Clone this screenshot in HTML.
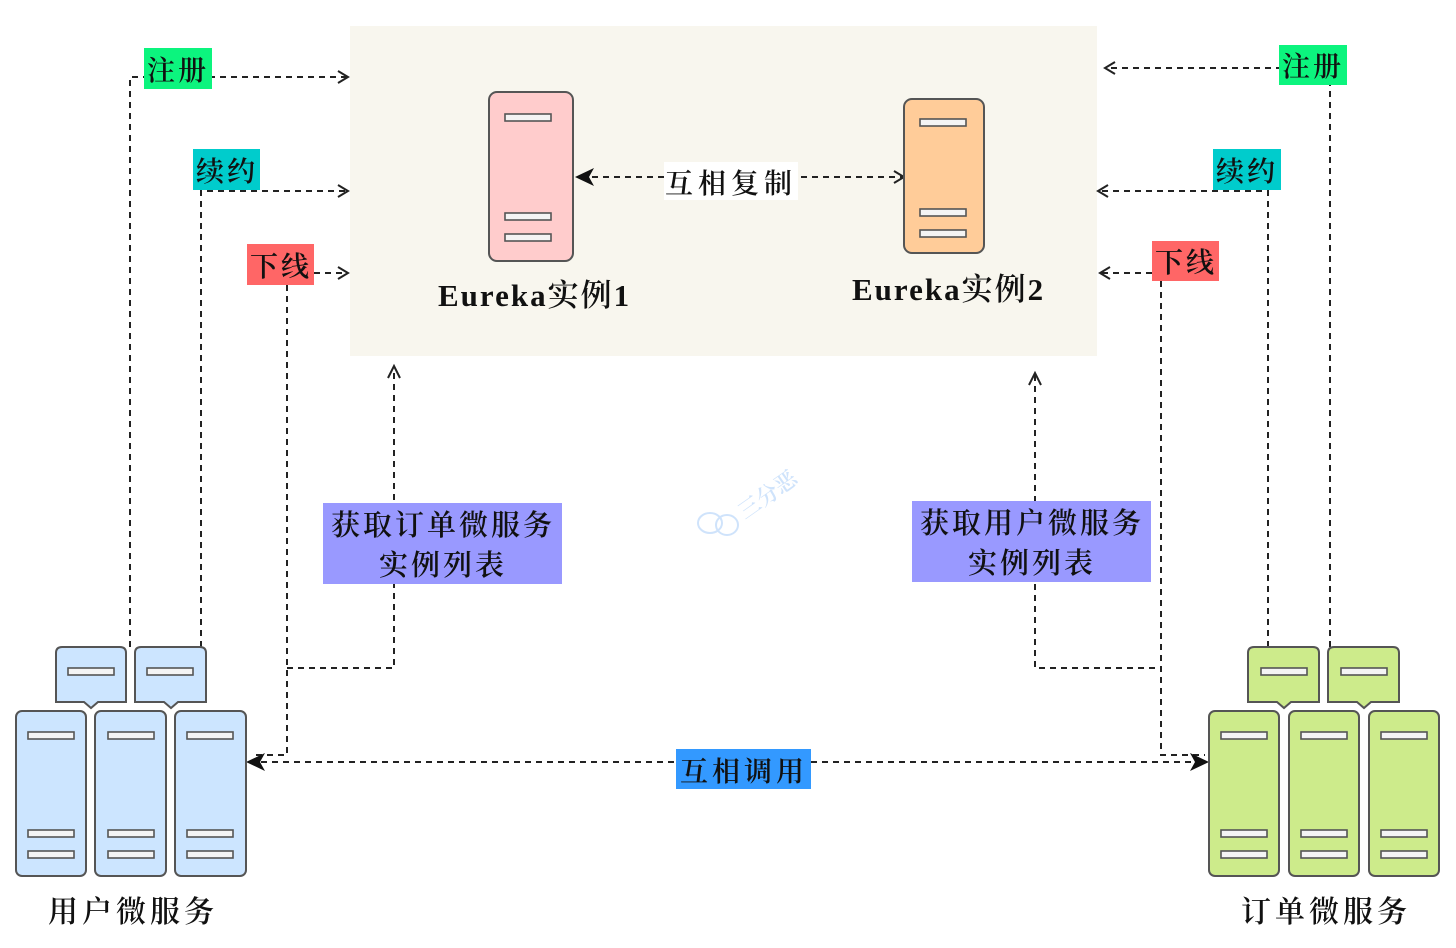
<!DOCTYPE html>
<html><head><meta charset="utf-8"><style>
html,body{margin:0;padding:0;background:#fff;}
svg{display:block;}
text{font-family:"Liberation Serif","Noto Serif CJK SC",serif;fill:#111;font-weight:600;}
</style></head><body>
<svg width="1456" height="948" viewBox="0 0 1456 948" xmlns="http://www.w3.org/2000/svg">
<defs>
<g id="bar"><rect width="46" height="7" fill="#f4f4f4" stroke="#555" stroke-width="1.6"/></g>
</defs>
<rect x="350" y="26" width="747" height="330" fill="#f8f6ee"/>

<g stroke="#222" stroke-width="2" stroke-dasharray="6,5" fill="none">
<path d="M130 647 V77 H346"/>
<path d="M201 647 V191 H346"/>
<path d="M287 285 V755 H252"/>
<path d="M287 668 H394 V368"/>
<path d="M1330 647 V68 H1108"/>
<path d="M1268 647 V191 H1100"/>
<path d="M1161 281 V755 H1205"/>
<path d="M1155 668 H1035 V375"/>
<path d="M250 762 H1206"/>
<path d="M592 177 H902"/>
<path d="M1152 273 H1100"/>
<path d="M314 273 H346"/>
</g>
<g stroke="#222" stroke-width="2" fill="none">
<path d="M338 71 L348 77 L338 83"/><path d="M338 185 L348 191 L338 197"/><path d="M338 267 L348 273 L338 279"/>
<path d="M1115 62 L1105 68 L1115 74"/><path d="M1108 185 L1098 191 L1108 197"/><path d="M1110 267 L1100 273 L1110 279"/>
<path d="M388 378 L394 366 L400 378"/><path d="M1029 385 L1035 373 L1041 385"/>
<path d="M894 171 L904 177 L894 183"/>
</g>
<g fill="#111">
<path d="M575 177 L594 168 L589 177 L594 186 Z"/>
<path d="M246 762 L265 753 L260 762 L265 771 Z"/>
<path d="M1209 762 L1190 753 L1195 762 L1190 771 Z"/>
</g>

<rect x="489" y="92" width="84" height="169" rx="8" fill="#ffcccc" stroke="#555" stroke-width="2"/>
<use href="#bar" x="505" y="114"/><use href="#bar" x="505" y="213"/><use href="#bar" x="505" y="234"/>
<rect x="904" y="99" width="80" height="154" rx="8" fill="#ffcc99" stroke="#555" stroke-width="2"/>
<use href="#bar" x="920" y="119"/><use href="#bar" x="920" y="209"/><use href="#bar" x="920" y="230"/>
<text x="438" y="306" font-size="31" letter-spacing="2">Eureka实例1</text>
<text x="852" y="300" font-size="31" letter-spacing="2">Eureka实例2</text>
<rect x="664" y="162" width="134" height="38" fill="#fff"/>
<text x="731" y="193" font-size="28" text-anchor="middle" letter-spacing="5">互相复制</text>

<g fill="#cce5ff" stroke="#555" stroke-width="2">
<path d="M62 647 H120 Q126 647 126 653 V702 H98 L91 708 L84 702 H56 V653 Q56 647 62 647Z"/>
<path d="M141 647 H200 Q206 647 206 653 V702 H178 L171 708 L164 702 H135 V653 Q135 647 141 647Z"/>
<rect x="16" y="711" width="70" height="165" rx="6"/>
<rect x="95" y="711" width="71" height="165" rx="6"/>
<rect x="175" y="711" width="71" height="165" rx="6"/>
</g>
<use href="#bar" x="68" y="668"/><use href="#bar" x="147" y="668"/>
<use href="#bar" x="28" y="732"/><use href="#bar" x="28" y="830"/><use href="#bar" x="28" y="851"/>
<use href="#bar" x="108" y="732"/><use href="#bar" x="108" y="830"/><use href="#bar" x="108" y="851"/>
<use href="#bar" x="187" y="732"/><use href="#bar" x="187" y="830"/><use href="#bar" x="187" y="851"/>
<text x="133" y="922" font-size="30" text-anchor="middle" letter-spacing="4">用户微服务</text>

<g fill="#cdeb8b" stroke="#555" stroke-width="2">
<path d="M1254 647 H1313 Q1319 647 1319 653 V702 H1291 L1284 708 L1277 702 H1248 V653 Q1248 647 1254 647Z"/>
<path d="M1334 647 H1393 Q1399 647 1399 653 V702 H1371 L1364 708 L1357 702 H1328 V653 Q1328 647 1334 647Z"/>
<rect x="1209" y="711" width="70" height="165" rx="6"/>
<rect x="1289" y="711" width="70" height="165" rx="6"/>
<rect x="1369" y="711" width="70" height="165" rx="6"/>
</g>
<use href="#bar" x="1261" y="668"/><use href="#bar" x="1341" y="668"/>
<use href="#bar" x="1221" y="732"/><use href="#bar" x="1221" y="830"/><use href="#bar" x="1221" y="851"/>
<use href="#bar" x="1301" y="732"/><use href="#bar" x="1301" y="830"/><use href="#bar" x="1301" y="851"/>
<use href="#bar" x="1381" y="732"/><use href="#bar" x="1381" y="830"/><use href="#bar" x="1381" y="851"/>
<text x="1326" y="922" font-size="30" text-anchor="middle" letter-spacing="4">订单微服务</text>

<rect x="144" y="48" width="68" height="41" fill="#0cf47e"/><text x="178" y="80" font-size="28" text-anchor="middle" letter-spacing="3">注册</text>
<rect x="193" y="149" width="67" height="41" fill="#00cccc"/><text x="227" y="181" font-size="28" text-anchor="middle" letter-spacing="3">续约</text>
<rect x="247" y="244" width="67" height="41" fill="#ff6666"/><text x="281" y="276" font-size="28" text-anchor="middle" letter-spacing="3">下线</text>
<rect x="1279" y="45" width="68" height="40" fill="#0cf47e"/><text x="1313" y="76" font-size="28" text-anchor="middle" letter-spacing="3">注册</text>
<rect x="1213" y="149" width="68" height="41" fill="#00cccc"/><text x="1247" y="181" font-size="28" text-anchor="middle" letter-spacing="3">续约</text>
<rect x="1152" y="241" width="67" height="40" fill="#ff6666"/><text x="1186" y="272" font-size="28" text-anchor="middle" letter-spacing="3">下线</text>

<rect x="323" y="503" width="239" height="81" fill="#9999ff"/>
<text x="443" y="535" font-size="29" text-anchor="middle" letter-spacing="3">获取订单微服务</text>
<text x="443" y="575" font-size="29" text-anchor="middle" letter-spacing="3">实例列表</text>
<rect x="912" y="501" width="239" height="81" fill="#9999ff"/>
<text x="1032" y="533" font-size="29" text-anchor="middle" letter-spacing="3">获取用户微服务</text>
<text x="1032" y="573" font-size="29" text-anchor="middle" letter-spacing="3">实例列表</text>

<rect x="676" y="749" width="135" height="40" fill="#3399ff"/>
<text x="744" y="781" font-size="28" text-anchor="middle" letter-spacing="4">互相调用</text>

<g fill="none" stroke="#cfe3fb" stroke-width="2">
<ellipse cx="710" cy="523" rx="12" ry="10"/><ellipse cx="727" cy="525" rx="11" ry="10"/>
</g>
<text x="745" y="520" font-size="22" style="fill:#cfe3fb" transform="rotate(-35 745 520)">三分恶</text>
</svg>
</body></html>
